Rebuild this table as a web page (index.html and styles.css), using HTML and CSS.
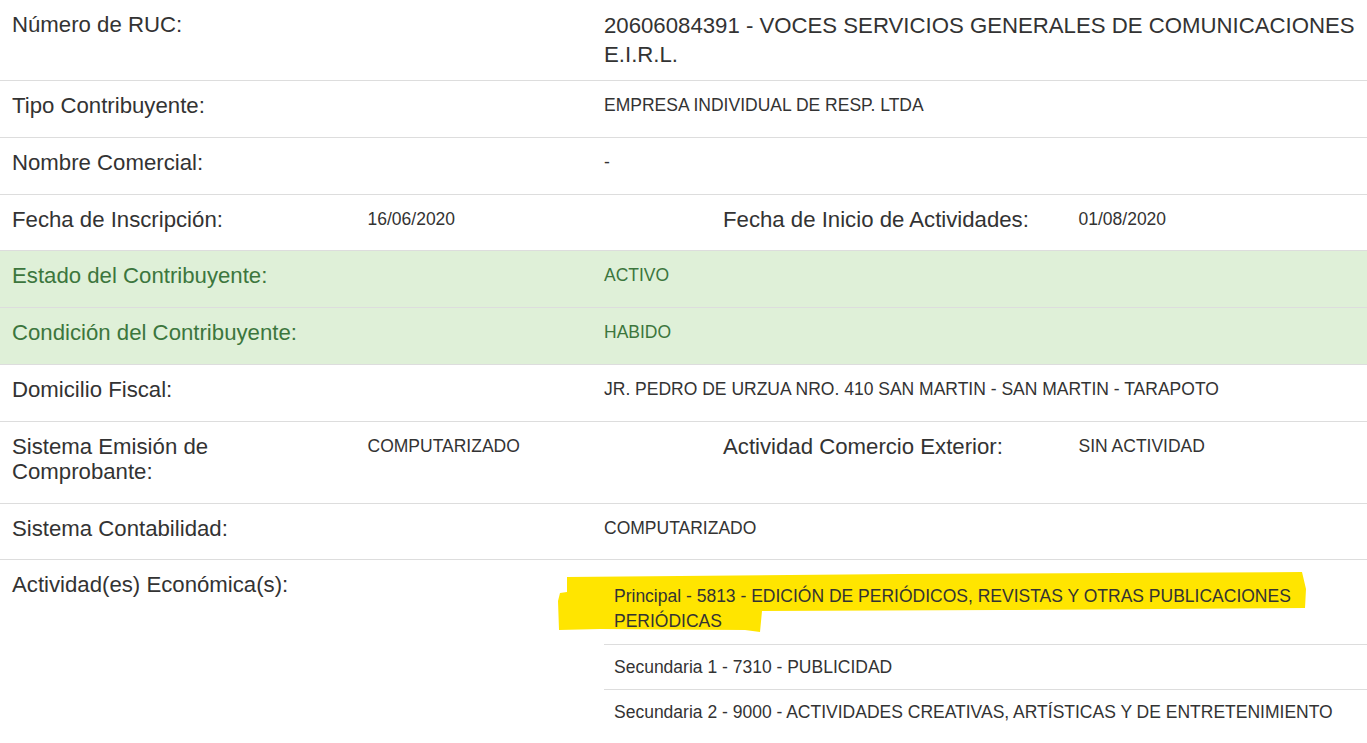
FILE: index.html
```html
<!DOCTYPE html>
<html lang="es">
<head>
    <meta charset="UTF-8">
    <meta name="viewport" content="width=device-width, initial-scale=1.0">
    <title>Consulta RUC</title>
    <link rel="stylesheet" href="styles.css">
</head>
<body>

    <div class="list-group">
        <div class="item">
            <div class="row two">
                <div class="col"><h4 class="heading">Número de RUC:</h4></div>
                <div class="col"><h4 class="heading value-heading">20606084391 - VOCES SERVICIOS GENERALES DE COMUNICACIONES E.I.R.L.</h4></div>
            </div>
        </div>

        <div class="item">
            <div class="row two">
                <div class="col"><h4 class="heading">Tipo Contribuyente:</h4></div>
                <div class="col"><p class="text">EMPRESA INDIVIDUAL DE RESP. LTDA</p></div>
            </div>
        </div>

        <div class="item">
            <div class="row two">
                <div class="col"><h4 class="heading">Nombre Comercial:</h4></div>
                <div class="col"><p class="text">-</p></div>
            </div>
        </div>

        <div class="item">
            <div class="row four">
                <div class="col"><h4 class="heading">Fecha de Inscripción:</h4></div>
                <div class="col"><p class="text">16/06/2020</p></div>
                <div class="col"><h4 class="heading">Fecha de Inicio de Actividades:</h4></div>
                <div class="col"><p class="text">01/08/2020</p></div>
            </div>
        </div>

        <div class="item item-success">
            <div class="row two">
                <div class="col"><h4 class="heading">Estado del Contribuyente:</h4></div>
                <div class="col"><p class="text">ACTIVO</p></div>
            </div>
        </div>

        <div class="item item-success">
            <div class="row two">
                <div class="col"><h4 class="heading">Condición del Contribuyente:</h4></div>
                <div class="col"><p class="text">HABIDO</p></div>
            </div>
        </div>

        <div class="item">
            <div class="row two">
                <div class="col"><h4 class="heading">Domicilio Fiscal:</h4></div>
                <div class="col"><p class="text">JR. PEDRO DE URZUA NRO. 410 SAN MARTIN - SAN MARTIN - TARAPOTO</p></div>
            </div>
        </div>

        <div class="item">
            <div class="row four">
                <div class="col"><h4 class="heading">Sistema Emisión de Comprobante:</h4></div>
                <div class="col"><p class="text">COMPUTARIZADO</p></div>
                <div class="col"><h4 class="heading">Actividad Comercio Exterior:</h4></div>
                <div class="col"><p class="text">SIN ACTIVIDAD</p></div>
            </div>
        </div>

        <div class="item">
            <div class="row two">
                <div class="col"><h4 class="heading">Sistema Contabilidad:</h4></div>
                <div class="col"><p class="text">COMPUTARIZADO</p></div>
            </div>
        </div>

        <div class="item item-last">
            <!-- resaltado a mano sobre la actividad principal -->
            <svg class="marker" width="760" height="70" viewBox="0 0 760 70">
                <polygon fill="#ffe500" points="17,11 350,8 752,6 756,23 755,42 450,44 212,45 210,66 195,64 50,63 9,64 8,35 10,27 17,26"/>
            </svg>
            <div class="row two">
                <div class="col"><h4 class="heading">Actividad(es) Económica(s):</h4></div>
                <div class="col">
                    <table class="table">
                        <tr><td>Principal - 5813 - EDICIÓN DE PERIÓDICOS, REVISTAS Y OTRAS PUBLICACIONES PERIÓDICAS</td></tr>
                        <tr><td>Secundaria 1 - 7310 - PUBLICIDAD</td></tr>
                        <tr><td>Secundaria 2 - 9000 - ACTIVIDADES CREATIVAS, ARTÍSTICAS Y DE ENTRETENIMIENTO</td></tr>
                    </table>
                </div>
            </div>
        </div>
    </div>

</body>
</html>
```

FILE: styles.css
```css
html, body {
    overflow: hidden;
}
body {
    margin: 0;
    font-family: "Liberation Sans", Arial, sans-serif;
    color: #333;
    background-color: #fff;
}
.list-group {
    width: 1422px;
}
.item {
    position: relative;
    padding: 12px 0 11px;
    border-bottom: 1px solid #ddd;
}
.item-success {
    background-color: #dff0d8;
    color: #3c763d;
}
.item-last {
    border-bottom: none;
}
.row {
    display: grid;
}
.row.two {
    grid-template-columns: 592px 830px;
}
.row.four {
    grid-template-columns: 355.5px 355.5px 355.5px 355.5px;
}
.col {
    padding: 0 18px 0 12px;
    min-width: 0;
}
.row.two .col + .col {
    padding-right: 42px;
}
.heading {
    margin: 0 0 7.8px;
    font-size: 22.2px;
    font-weight: normal;
    line-height: 25px;
}
.value-heading {
    margin-bottom: 0;
    line-height: 28.5px;
}
.text {
    margin: 0;
    font-size: 17.5px;
    line-height: 24.7px;
}
.marker {
    position: absolute;
    left: 550px;
    top: 6px;
    z-index: 0;
}
.table {
    position: relative;
    z-index: 1;
    width: 100%;
    margin-top: 2px;
    border-collapse: collapse;
    font-size: 17.5px;
    line-height: 24.7px;
}
.table td {
    padding: 10px;
}
.table tr + tr td {
    border-top: 1px solid #ddd;
}
```
